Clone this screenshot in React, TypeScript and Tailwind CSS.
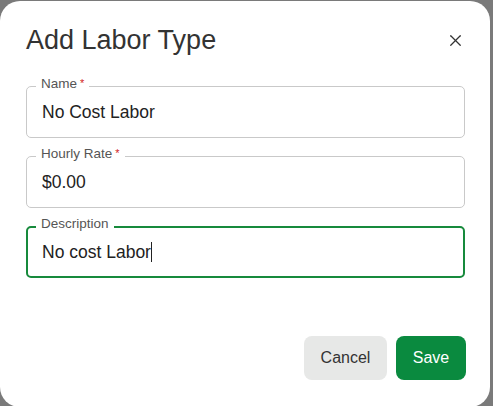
import React from "react";
import { X } from "lucide-react";

interface FieldProps {
  label: string;
  value: string;
  required?: boolean;
  focused?: boolean;
}

function OutlinedField({ label, value, required, focused }: FieldProps) {
  return (
    <div
      className={`relative h-[52px] rounded-[5px] flex items-center ${
        focused ? "border-2 border-[#178a3c] pl-[14px]" : "border border-[#c9c9c9] pl-[15px]"
      }`}
    >
      {/* notched label sits on top of the border */}
      <span
        className={`absolute px-[5px] bg-white flex items-start text-[13.5px] leading-[13px] text-[#555] ${
          focused ? "top-[-11px] left-[8px]" : "top-[-10px] left-[9px]"
        }`}
      >
        {label}
        {required && <span className="ml-[3px] mt-[1px] text-[11px] leading-[10px] text-[#d21a1a]">*</span>}
      </span>
      <span className="text-[17.5px] leading-[20px] text-[#222]">{value}</span>
      {focused && <span className="w-px h-[20px] bg-[#222] ml-[0.5px]" />}
    </div>
  );
}

export default function App() {
  return (
    <div
      className="w-[493px] h-[406px] overflow-hidden bg-[#7a7a7a]"
      style={{ fontFamily: '"Liberation Sans", Arial, Helvetica, sans-serif' }}
    >
      <div className="mt-[1px] w-[490px] h-[406px] rounded-[20px] bg-white px-[26px] pt-[26px] flex flex-col">
        {/* Header */}
        <div className="flex items-center justify-between">
          <h2 className="text-[27px] leading-[27px] text-[#333] font-normal">Add Labor Type</h2>
          <button type="button" className="mr-[-1px] text-[#333]">
            <X className="w-[19px] h-[19px]" strokeWidth={1.6} />
          </button>
        </div>

        {/* Fields */}
        <div className="mt-[32px] flex flex-col gap-[18px] w-[439px]">
          <OutlinedField label="Name" value="No Cost Labor" required />
          <OutlinedField label="Hourly Rate" value="$0.00" required />
          <OutlinedField label="Description" value="No cost Labor" focused />
        </div>

        {/* Footer */}
        <div className="mt-[58px] w-[440px] flex justify-end gap-[9px]">
          <button
            type="button"
            className="w-[83px] h-[44px] rounded-[8px] bg-[#e7e8e7] text-[16px] text-[#333]"
          >
            Cancel
          </button>
          <button
            type="button"
            className="w-[70px] h-[44px] rounded-[8px] bg-[#0a8a3f] text-[16px] text-white"
          >
            Save
          </button>
        </div>
      </div>
    </div>
  );
}
